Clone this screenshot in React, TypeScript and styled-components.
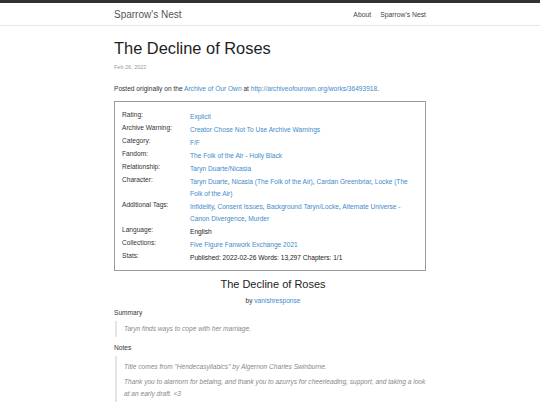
import { Fragment } from "react";
import styled, { createGlobalStyle } from "styled-components";

const GlobalStyle = createGlobalStyle`
  html, body {
    margin: 0;
    padding: 0;
    background: #fff;
  }
  body {
    font-family: "Liberation Sans", Arial, sans-serif;
    color: #333;
    font-size: 6.6px;
  }
  a {
    color: #428bca;
    text-decoration: none;
  }
`;

type Tag = { label: string; values?: string[]; text?: string };

const tags: Tag[] = [
  { label: "Rating:", values: ["Explicit"] },
  { label: "Archive Warning:", values: ["Creator Chose Not To Use Archive Warnings"] },
  { label: "Category:", values: ["F/F"] },
  { label: "Fandom:", values: ["The Folk of the Air - Holly Black"] },
  { label: "Relationship:", values: ["Taryn Duarte/Nicasia"] },
  {
    label: "Character:",
    values: [
      "Taryn Duarte",
      "Nicasia (The Folk of the Air)",
      "Cardan Greenbriar",
      "Locke (The Folk of the Air)",
    ],
  },
  {
    label: "Additional Tags:",
    values: [
      "Infidelity",
      "Consent Issues",
      "Background Taryn/Locke",
      "Alternate Universe - Canon Divergence",
      "Murder",
    ],
  },
  { label: "Language:", text: "English" },
  { label: "Collections:", values: ["Five Figure Fanwork Exchange 2021"] },
  { label: "Stats:", text: "Published: 2022-02-26 Words: 13,297 Chapters: 1/1" },
];

function App() {
  return (
    <>
      <GlobalStyle />
      <Header>
        <Container>
          <HeaderInner>
            <Brand href="#">Sparrow's Nest</Brand>
            <Nav>
              <a href="#">About</a>
              <a href="#">Sparrow's Nest</a>
            </Nav>
          </HeaderInner>
        </Container>
      </Header>
      <Container>
        <PostTitle>The Decline of Roses</PostTitle>
        <PostDate>Feb 26, 2022</PostDate>
        <Posted>
          Posted originally on the <a href="#">Archive of Our Own</a> at{" "}
          <a href="#">http://archiveofourown.org/works/36493918</a>.
        </Posted>
        <MetaBox>
          {tags.map((t) => (
            <MetaRow key={t.label}>
              <MetaLabel>{t.label}</MetaLabel>
              <MetaValue>
                {t.values
                  ? t.values.map((v, i) => (
                      <Fragment key={v}>
                        <a href="#">{v}</a>
                        {i < t.values!.length - 1 ? ", " : ""}
                      </Fragment>
                    ))
                  : t.text}
              </MetaValue>
            </MetaRow>
          ))}
        </MetaBox>
        <WorkTitle>The Decline of Roses</WorkTitle>
        <Byline>
          by <a href="#">vanishresponse</a>
        </Byline>
        <SectionHead>Summary</SectionHead>
        <Quote>
          <p>Taryn finds ways to cope with her marriage.</p>
        </Quote>
        <SectionHead>Notes</SectionHead>
        <Quote $spaced>
          <p>Title comes from "Hendecasyllabics" by Algernon Charles Swinburne.</p>
          <p>
            Thank you to alarnorn for betaing, and thank you to azurrys for
            cheerleading, support, and taking a look at an early draft. &lt;3
          </p>
        </Quote>
      </Container>
    </>
  );
}

const Header = styled.header`
  border-top: 3px solid #333;
  border-bottom: 1px solid #e7e7e7;
  height: 22px;
`;

const Container = styled.div`
  width: 312px;
  margin: 0 auto;
`;

const HeaderInner = styled.div`
  height: 22px;
  display: flex;
  justify-content: space-between;
  align-items: center;
`;

const Brand = styled.a`
  && {
    color: #555;
  }
  font-size: 10px;
`;

const Nav = styled.nav`
  display: flex;
  gap: 9px;
  font-size: 6.8px;
  a {
    color: #444;
  }
`;

const PostTitle = styled.h1`
  margin: 13px 0 0;
  font-size: 16.4px;
  font-weight: 400;
  line-height: 18px;
  color: #222;
`;

const PostDate = styled.div`
  margin-top: 6px;
  font-size: 5.5px;
  line-height: 8px;
  color: #999;
`;

const Posted = styled.p`
  margin: 13px 0 0;
  line-height: 10px;
`;

const MetaBox = styled.div`
  margin-top: 7px;
  border: 1.5px solid #9a9a9a;
  padding: 8px 7px 6px;
  display: flex;
  flex-direction: column;
`;

const MetaRow = styled.div`
  display: grid;
  grid-template-columns: 68px 1fr;
`;

const MetaLabel = styled.div`
  line-height: 9px;
  color: #333;
`;

const MetaValue = styled.div`
  padding-top: 1px;
  line-height: 12px;
  color: #222;
`;

const WorkTitle = styled.h2`
  margin: 7px 0 0;
  padding-left: 6px;
  text-align: center;
  font-size: 11px;
  font-weight: 400;
  line-height: 13px;
  color: #222;
`;

const Byline = styled.div`
  margin-top: 5px;
  padding-left: 6px;
  text-align: center;
  line-height: 9px;
`;

const SectionHead = styled.div`
  margin-top: 3px;
  line-height: 9px;
  color: #333;
`;

const Quote = styled.div<{ $spaced?: boolean }>`
  margin: 4px 0 6px 1px;
  padding: ${(p) => (p.$spaced ? "5px" : "2px")} 0 2px 7px;
  border-left: 2px solid #e5e5e5;
  font-style: italic;
  line-height: 12px;
  color: #888;
  p {
    margin: 0 0 3px;
  }
  p:last-child {
    margin-bottom: 0;
  }
`;

export default App;
